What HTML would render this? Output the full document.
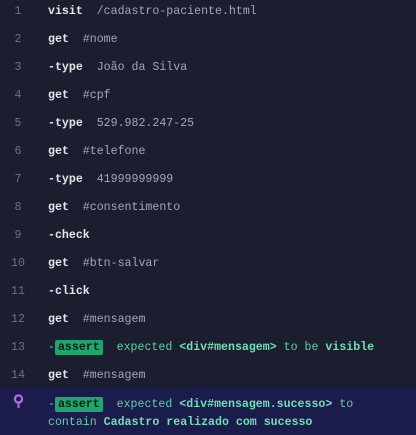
<!DOCTYPE html>
<html><head><meta charset="utf-8"><style>
body{margin:0;width:416px;height:435px;background:#1b1e2e;overflow:hidden;font-family:"Liberation Mono",monospace;font-size:11.6px;}
.r{position:absolute;left:0;width:416px;height:28px;}
.n{position:absolute;left:4px;width:28px;text-align:center;color:#6b7082;top:5px;}
.t{position:absolute;left:48px;top:5px;white-space:pre;}
.c{color:#e4e6ee;font-weight:bold;}
.a{color:#a3a7b8;}
.g{color:#5fd0a6;}
.gb{color:#6fe0b4;font-weight:bold;}
.b{background:#1fa56e;color:#0c1e16;font-weight:bold;padding:1px 3px;border-radius:2px;}
.hl{position:absolute;left:0;top:388px;width:416px;height:47px;background:#1b1b4c;}
</style></head><body>
<div class="r" style="top:0"><span class="n">1</span><span class="t"><span class="c">visit</span>  <span class="a">/cadastro-paciente.html</span></span></div>
<div class="r" style="top:28px"><span class="n">2</span><span class="t"><span class="c">get</span>  <span class="a">#nome</span></span></div>
<div class="r" style="top:56px"><span class="n">3</span><span class="t"><span class="c">-type</span>  <span class="a">João da Silva</span></span></div>
<div class="r" style="top:84px"><span class="n">4</span><span class="t"><span class="c">get</span>  <span class="a">#cpf</span></span></div>
<div class="r" style="top:112px"><span class="n">5</span><span class="t"><span class="c">-type</span>  <span class="a">529.982.247-25</span></span></div>
<div class="r" style="top:140px"><span class="n">6</span><span class="t"><span class="c">get</span>  <span class="a">#telefone</span></span></div>
<div class="r" style="top:168px"><span class="n">7</span><span class="t"><span class="c">-type</span>  <span class="a">41999999999</span></span></div>
<div class="r" style="top:196px"><span class="n">8</span><span class="t"><span class="c">get</span>  <span class="a">#consentimento</span></span></div>
<div class="r" style="top:224px"><span class="n">9</span><span class="t"><span class="c">-check</span></span></div>
<div class="r" style="top:252px"><span class="n">10</span><span class="t"><span class="c">get</span>  <span class="a">#btn-salvar</span></span></div>
<div class="r" style="top:280px"><span class="n">11</span><span class="t"><span class="c">-click</span></span></div>
<div class="r" style="top:308px"><span class="n">12</span><span class="t"><span class="c">get</span>  <span class="a">#mensagem</span></span></div>
<div class="r" style="top:336px"><span class="n">13</span><span class="t"><span class="g">-</span><span class="b">assert</span>  <span class="g">expected</span> <span class="gb">&lt;div#mensagem&gt;</span> <span class="g">to be</span> <span class="gb">visible</span></span></div>
<div class="r" style="top:364px"><span class="n">14</span><span class="t"><span class="c">get</span>  <span class="a">#mensagem</span></span></div>
<div class="hl"></div>
<svg style="position:absolute;left:13px;top:394px" width="11" height="15" viewBox="0 0 11 15"><circle cx="5.5" cy="5" r="3.6" fill="none" stroke="#b46ae6" stroke-width="2.2"/><path d="M5.5 9v5" stroke="#b46ae6" stroke-width="2"/></svg>
<div style="position:absolute;left:48px;top:396px;white-space:pre;line-height:18px"><span class="g">-</span><span class="b">assert</span>  <span class="g">expected</span> <span class="gb">&lt;div#mensagem.sucesso&gt;</span> <span class="g">to</span>
<span class="g">contain</span> <span class="gb">Cadastro realizado com sucesso</span></div>
</body></html>
